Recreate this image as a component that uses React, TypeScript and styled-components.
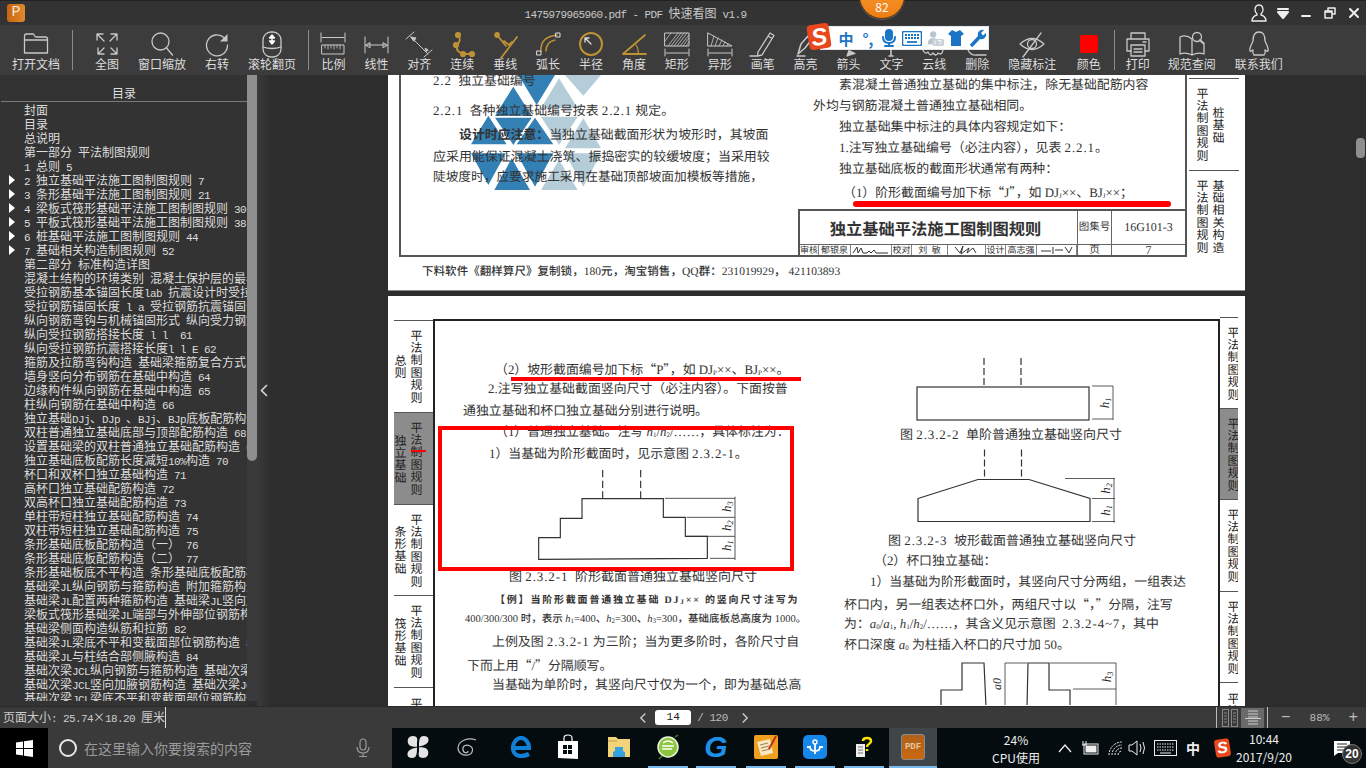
import React from 'react';
import styled, { createGlobalStyle } from 'styled-components';

const Global = createGlobalStyle`
  html, body { margin: 0; padding: 0; width: 1366px; height: 768px; overflow: hidden; background: #2d2d2d; }
  * { box-sizing: border-box; }
`;
const UI = '"Noto Sans CJK SC", "Liberation Sans", sans-serif';
const DOC = '"Liberation Serif", "Noto Sans CJK SC", serif';

const Shell = styled.div`display: flex; flex-direction: column; width: 1366px; height: 768px; overflow: hidden; font-family: ${UI};`;

/* title bar */
const TitleBar = styled.header`display: flex; align-items: center; height: 25px; flex: none; background: #333; border-top: 1px solid #222; padding-left: 7px;`;
const AppLogo = styled.div`width: 18px; height: 18px; border-radius: 3px; background: linear-gradient(90deg, #c8650f, #e08a30); color: #f5e6d5; font: 15px/18px "Liberation Mono", monospace; text-align: center;`;
const TitleText = styled.div`flex: 1; text-align: center; color: #c8c8c8; font-size: 12px; line-height: 24px; white-space: pre;`;
const WinControls = styled.div`display: flex; align-items: center; width: 120px; height: 24px; color: #eee;`;
const WinButton = styled.div<{ $w: number }>`width: ${p => p.$w}px; display: flex; justify-content: center; align-items: center;`;

/* toolbar */
const ToolBar = styled.nav`display: flex; height: 50px; flex: none; background: #3c3c3c; padding-left: 8px;`;
const ToolItem = styled.div<{ $w: number }>`width: ${p => p.$w}px; flex: none; display: flex; flex-direction: column; align-items: center; padding-top: 5px;`;
const ToolIcon = styled.div<{ $gold?: boolean }>`width: 28px; height: 28px; color: ${p => (p.$gold ? '#bd9234' : '#c8c8c8')};`;
const ToolLabel = styled.div`margin-top: -1px; font-size: 12px; line-height: 14px; color: #ddd; white-space: nowrap;`;
const ToolDivider = styled.div<{ $l: number; $r: number }>`width: 1px; height: 40px; margin: 5px ${p => p.$r}px 0 ${p => p.$l}px; background: #8a8a8a; flex: none;`;
const ColorSwatch = styled.div`width: 18px; height: 18px; margin: 5px; border-radius: 2px; background: #f00;`;

/* overlays at the top */
const Badge = styled.div`position: absolute; left: 859px; top: -27px; width: 46px; height: 46px; border-radius: 50%; background: linear-gradient(#f9a33c, #ef7d12); border: 1px solid #5c3a12; box-shadow: 0 1px 0 #fff3; color: #fff; font-size: 12px; display: flex; align-items: flex-end; justify-content: center; line-height: 17px; padding-bottom: 3px; z-index: 5;`;
const SogouBar = styled.div`position: absolute; left: 820px; top: 26px; width: 169px; height: 24px; background: #fff; border: 1px solid #dfe6ee; display: flex; align-items: center; z-index: 5; color: #1b75c4;`;
const SogouLogo = styled.div`position: absolute; left: 808px; top: 24px; width: 22px; height: 25px; background: #e9481c; border-radius: 4px; transform: rotate(-9deg); color: #fff; font: italic bold 24px/25px "Liberation Sans", sans-serif; text-align: center; z-index: 6;`;
const SogouCell = styled.div<{ $w: number; $bold?: boolean }>`width: ${p => p.$w}px; flex: none; display: flex; justify-content: center; align-items: center; font-size: 15px; font-weight: ${p => (p.$bold ? 700 : 400)};`;
const SogouTray = styled.div`width: 15px; height: 18px; background: #e9481c; border-radius: 3px; transform: rotate(-9deg); color: #fff; font: italic bold 16px/18px "Liberation Sans", sans-serif; text-align: center;`;

/* main */
const Main = styled.main`display: flex; height: 631px; flex: none; overflow: hidden; position: relative;`;
const Sidebar = styled.aside`width: 247px; flex: none; background: #333; color: #ddd; display: flex; flex-direction: column; padding-bottom: 5px;`;
const SideHead = styled.div`height: 27px; flex: none; margin-left: 1px; border-bottom: 1px solid #7a7a7a; text-align: center; font-size: 12px; line-height: 35px; overflow: hidden;`;
const SideList = styled.ul`list-style: none; margin: 1px 0 0; padding: 0; flex: 1; overflow: hidden;`;
const SideRow = styled.li`position: relative; height: 14px; padding-left: 24px; font-size: 12px; line-height: 14px; white-space: pre; overflow: hidden;`;
const Caret = styled.span`position: absolute; left: 9px; top: 2px; width: 0; height: 0; border-left: 6px solid #fff; border-top: 5px solid transparent; border-bottom: 5px solid transparent;`;
const Latin = styled.span`font: 11px "Liberation Mono", monospace; letter-spacing: -0.6px;`;
const ScrollTrack = styled.div`width: 10px; flex: none; background: #3a3a3a; margin-bottom: 5px; position: relative;`;
const ScrollThumb = styled.div`height: 386px; background: #8f8f8f; border-radius: 0 0 5px 5px;`;
const Collapse = styled.div`width: 14px; flex: none; background: linear-gradient(90deg, #3a3a3a, #2e2e2e); display: flex; align-items: center; justify-content: center; color: #ddd;`;
const Viewer = styled.section`flex: 1; background: #2d2d2d; padding-left: 117px; display: flex; flex-direction: column; gap: 5px; overflow: hidden; position: relative;`;
const ViewerThumb = styled.div`position: absolute; right: 1px; top: 63px; width: 9px; height: 20px; border-radius: 4px; background: #8f8f8f;`;

/* document */
const Page = styled.article<{ $h: number }>`position: relative; width: 857px; height: ${p => p.$h}px; flex: none; background: #fff; color: #333; font-family: ${DOC}; text-rendering: geometricPrecision; overflow: hidden; box-shadow: inset 0 -1px 0 #888;`;
const Mark = styled.svg`position: absolute; left: -3px; top: 0;`;
const FirstRow = styled.div`position: relative; display: flex; margin-left: 11px; height: 182px;`;
const FirstFrame = styled.div`width: 788px; flex: none; border: 2px solid #555; border-top: 0; display: flex; flex-direction: column; padding-left: 32px; overflow: hidden;`;
const Columns = styled.div`display: flex; gap: 42px;`;
const Col = styled.div<{ $w: number; $top?: number }>`width: ${p => p.$w}px; flex: none; margin-top: ${p => p.$top ?? 0}px;`;
const Line = styled.div<{ $x?: number; $h?: number; $mt?: number; $size?: number; $ls?: number; $weight?: number }>`
  padding-left: ${p => p.$x ?? 0}px; margin-top: ${p => p.$mt ?? 0}px; height: ${p => p.$h ?? 21.5}px; line-height: ${p => p.$h ?? 21.5}px;
  font-size: ${p => p.$size ?? 12.9}px; letter-spacing: ${p => p.$ls ?? 0}px; font-weight: ${p => p.$weight ?? 400}; white-space: pre;
`;
const Strong = styled.b`font-weight: 700;`;
const Sub = styled.sub`font-size: 7px; vertical-align: -1px; line-height: 0;`;
const Quote = styled.span`font-family: ${UI};`;
const Digits = styled.span`letter-spacing: 0.9px;`;
const Footer = styled.div`padding: 7px 0 0 34px; font-size: 11.5px; line-height: 16px; font-weight: 500; color: #333; white-space: pre; letter-spacing: 0.05px;`;
const TitleBox = styled.div`margin: auto 0 0 auto; width: 387px; height: 46px; flex: none; border-top: 2px solid #555; border-left: 2px solid #555; display: grid; grid-template-columns: 277px 34px 74px; grid-template-rows: 33px 11px; color: #333; font-size: 10px;`;
const TitleMain = styled.div`display: flex; align-items: center; justify-content: center; font-size: 16.3px; font-weight: 700; padding-right: 6px;`;
const TitleCell = styled.div<{ $size?: number }>`border-left: 1px solid #666; display: flex; align-items: center; justify-content: center; font-size: ${p => p.$size ?? 10.5}px; line-height: 11px;`;
const Signoff = styled.div`border-top: 1px solid #666; display: flex; align-items: center; overflow: hidden;`;
const SignCell = styled.span<{ $w: number }>`width: ${p => p.$w}px; flex: none; font-size: 9px; line-height: 10px; border-right: 1px solid #888; text-align: center; height: 11px; white-space: pre;`;
const Bottom = styled(TitleCell)`border-top: 1px solid #666;`;

const TabStack = styled.div<{ $w: number; $ml?: number; $mt?: number }>`width: ${p => p.$w}px; flex: none; margin-left: ${p => p.$ml ?? 0}px; margin-top: ${p => p.$mt ?? 0}px; display: flex; flex-direction: column; overflow: hidden;`;
const Tab = styled.div<{ $h: number; $active?: boolean; $pad?: number; $last?: boolean }>`height: ${p => p.$h}px; flex: none; border-top: 1px solid #555; background: ${p => (p.$active ? '#8c8c8c' : 'transparent')}; display: flex; align-items: ${p => (p.$last ? 'flex-start' : 'center')}; gap: 4px; padding-left: ${p => p.$pad ?? 0}px; padding-top: ${p => (p.$last ? 9 : 0)}px; color: #222;`;
const TabText = styled.span<{ $ls?: number }>`writing-mode: vertical-rl; text-orientation: upright; white-space: nowrap; font-size: 12px; line-height: 12px; letter-spacing: ${p => p.$ls ?? 0.4}px; font-family: ${UI};`;
const TabGap = styled.span`width: 12px; flex: none;`;

const SecondRow = styled.div`display: flex; padding-top: 23px;`;
const Frame = styled.div`width: 787px; flex: none; height: 600px; border: 2px solid #222; border-bottom: 0; display: flex; gap: 44px; padding: 36.5px 0 0 28px;`;
const Fig = styled.svg`display: block;`;
const Annot = styled.div`position: absolute; left: 50px; top: 130px; width: 356px; height: 145px; border: 4px solid #f00;`;
const RedRule = styled.div<{ $l: number; $t: number; $w: number; $h: number; $round?: boolean }>`position: absolute; left: ${p => p.$l}px; top: ${p => p.$t}px; width: ${p => p.$w}px; height: ${p => p.$h}px; background: #f00; border-radius: ${p => (p.$round ? '3px' : '0')};`;

/* status bar */
const StatusBar = styled.footer`height: 22px; flex: none; background: #3a3a3a; border-top: 1px solid #2a2a2a; display: flex; align-items: center; color: #ccc; font-size: 12px; position: relative;`;
const StatusText = styled.div`width: 166px; padding-left: 3px; white-space: pre; border-right: 1px solid #ddd; height: 21px; line-height: 19px; flex: none;`;
const Pager = styled.div`display: flex; align-items: center; margin-left: 473px; width: 110px;`;
const PageBox = styled.div`width: 40px; height: 15px; margin: 0 6px 0 7px; background: #fff; border-radius: 3px; color: #222; font: 11px/15px "Liberation Mono", monospace; text-align: center;`;
const PageText = styled.span`font: 11px "Liberation Mono", monospace; letter-spacing: -0.5px; white-space: pre; color: #bbb;`;
const ViewSwitch = styled.div`display: flex; align-items: center; margin-left: 467px; height: 22px; border-left: 1px solid #bbb; border-right: 1px solid #bbb; width: 52px; padding-left: 5px;`;
const ViewOn = styled.div`width: 23px; height: 20px; margin-left: 3px; background: #6a6a6a; display: flex; align-items: center; justify-content: center;`;
const Zoomer = styled.div`display: flex; align-items: center; justify-content: space-between; width: 77px; margin-left: 13px; color: #bbb; font: 11px "Liberation Mono", monospace;`;
const ZoomSign = styled.span`font-size: 16px;`;

/* taskbar */
const TaskBar = styled.div`height: 40px; flex: none; background: #050c10; display: flex; align-items: center; color: #fff; position: relative;`;
const StartButton = styled.div`width: 48px; height: 40px; background: #000; display: flex; align-items: center; justify-content: center; flex: none;`;
const SearchBox = styled.div`width: 344px; height: 40px; background: #3a3a3a; display: flex; align-items: center; padding-left: 11px; flex: none;`;
const Cortana = styled.div`width: 18px; height: 18px; border-radius: 50%; border: 2.5px solid #e8e8e8; flex: none;`;
const SearchText = styled.div`margin-left: 7px; font-size: 14px; color: #9a9a9a; width: 272px; white-space: nowrap;`;
const TaskSlot = styled.div<{ $ml: number; $w?: number; $on?: boolean; $active?: boolean }>`
  position: relative; width: ${p => p.$w ?? 40}px; height: 40px; flex: none; margin-left: ${p => p.$ml}px; display: flex; align-items: center; justify-content: center;
  background: ${p => (p.$active ? '#3f4548' : 'transparent')};
  border-bottom: 2px solid ${p => (p.$on ? '#76b9ed' : 'transparent')}; font-size: 12px;
`;
const CPU = styled.div`margin-left: 49px; width: 60px; flex: none; text-align: center; font-size: 12px; line-height: 18px; padding-top: 2px; color: #eee;`;
const Tray = styled.div<{ $ml: number; $w: number }>`margin-left: ${p => p.$ml}px; width: ${p => p.$w}px; flex: none; display: flex; justify-content: center; align-items: center; font-size: 14px; position: relative; color: #eee;`;
const Clock = styled.div`width: 76px; margin-left: -6px; flex: none; text-align: center; font: 12px/18px "Noto Sans CJK SC", sans-serif; color: #eee; white-space: nowrap;`;
const NotifyCount = styled.div`position: absolute; right: 0; bottom: -8px; width: 20px; height: 20px; border-radius: 50%; background: #333; border: 1px solid #777; color: #fff; font: bold 12px/18px "Liberation Sans", sans-serif; text-align: center;`;
const Pdf = styled.div`width: 24px; height: 26px; background: linear-gradient(#b0601a, #c8690f); border: 1px solid #8a8a8a; border-radius: 3px; font: bold 9px/24px "Liberation Mono", monospace; color: #e8c8a0; text-align: center;`;
const GLetter = styled.div`font: italic bold 30px/32px "Liberation Sans", sans-serif; color: #1e90e8;`;

/* drawing helper */
const Ico = ({ children, s = 28, w = 1.3, fill = 'none' }: { children: React.ReactNode; s?: number; w?: number; fill?: string }) => (
  <svg width={s} height={s} viewBox={`0 0 ${s} ${s}`} fill={fill} stroke="currentColor" strokeWidth={w} strokeLinecap="round" strokeLinejoin="round">{children}</svg>
);

const Mix = ({ text }: { text: string }) => (
  <>{text.split(/([\x20-\x7e]+)/).map((t, i) => (i % 2 ? <Latin key={i}>{t}</Latin> : t))}</>
);

const tools: { l: string; w: number; gold?: boolean; i: React.ReactNode; d?: [number, number] }[] = [
  { l: '打开文档', w: 56, d: [8, 13], i: <path d="M3 24V7q0-2 2-2h7l2 3h10q2 0 2 2v14zM3 11h23" transform="translate(-.5 -1)" /> },
  { l: '全图', w: 42, i: <path d="M4 10V4h6M4 4l7 7M24 10V4h-6M24 4l-7 7M11 24H5v-6M5 24l6-6M18 24h6v-6M24 24l-6-6" /> },
  { l: '窗口缩放', w: 68, i: <><circle cx="12.5" cy="11.5" r="8.5" /><path d="M18.5 18l6 7" /></> },
  { l: '右转', w: 42, i: <><path d="M21 7.5A10.5 10.5 0 1 0 24.5 15" /><path d="M24.5 4v7.5H17z" fill="currentColor" stroke="none" /></> },
  { l: '滚轮翻页', w: 68, d: [2, 3], i: <><rect x="5" y="2" width="18" height="25" rx="8" /><path d="M5 17q9 3 18 0" /><path d="M14 5v9M11.5 8L14 5l2.5 3zM11.5 11l2.5 3 2.5-3z" fill="#fff" stroke="#fff" /></> },
  { l: '比例', w: 42.93, i: <><path d="M2 3v9M26 3v9M3 7.5h22" strokeWidth="1" /><rect x="3" y="15" width="22" height="9" strokeWidth="1" /><path d="M6 15v3M9 15v4M12 15v3M15 15v4M18 15v3M21 15v4" strokeWidth=".8" /></> },
  { l: '线性', w: 42.93, i: <path d="M3 7v16M26 7v16M4 15h21M4 15l4-2.500v5zM25 15l-4-2.500v5z" strokeWidth="1" /> },
  { l: '对齐', w: 42.93, i: <><path d="M1 9l8-7M19 27l8-7M6 7l17 17" strokeWidth="1" /><path d="M6 7l5 1-2 3zM21 21l-1-3 3 2z" fill="currentColor" strokeWidth="1" /></> },
  { l: '连续', w: 42.93, gold: true, i: <g strokeWidth="1.800"><path d="M10 5q4 5-1 10-2 8 9 9h8" /><circle cx="10" cy="5" r="2.200" fill="currentColor" /><circle cx="8" cy="15" r="2.200" fill="currentColor" /><circle cx="15" cy="24" r="2.200" fill="currentColor" /><circle cx="24" cy="24" r="2.200" fill="currentColor" /></g> },
  { l: '垂线', w: 42.93, gold: true, i: <g strokeWidth="1.800"><path d="M26 7L10 28M6 5l9 11M13 11l5 4 3-3" /><circle cx="6" cy="5" r="2" fill="currentColor" /></g> },
  { l: '弧长', w: 42.93, gold: true, i: <g strokeWidth="1.500"><path d="M7 21q-1-14 16-16" /><path d="M12 21q0-9 9-11" /><rect x="3" y="21" width="4" height="4" strokeWidth="1" stroke="#ddd" /><rect x="22" y="3" width="4" height="4" strokeWidth="1" stroke="#ddd" /></g> },
  { l: '半径', w: 42.93, gold: true, i: <g strokeWidth="2"><circle cx="14" cy="14" r="11" /><path d="M14 14L8 8M8 8h4M8 8v4" strokeWidth="1.300" stroke="#ddd" /></g> },
  { l: '角度', w: 42.93, gold: true, i: <g strokeWidth="1.800"><path d="M25 5L3 24h23" /><path d="M16 15q3 4 2 9" strokeWidth="1.200" /></g> },
  { l: '矩形', w: 42.93, i: <><rect x="2" y="3" width="24" height="13" strokeWidth="1" /><path d="M5 16L15 3M11 16L21 3M17 16L26 5M2 11l6-8M23 16l3-4M8 16L18 3M14 16L24 3M20 16l6-8" strokeWidth=".8" /><path d="M2 19v7M26 19v7M3 23h22" strokeWidth="1" /></> },
  { l: '异形', w: 42.93, i: <><path d="M2 3l24 13H2z" strokeWidth="1" /><path d="M5 16l3-10M9 16l3-8M13 16l3-6M17 16l2-4M21 16l1-2" strokeWidth=".8" /><path d="M2 19v7M26 19v7M3 23h22" strokeWidth="1" /></> },
  { l: '画笔', w: 42.93, i: <path d="M9 22L21 3l4 2.500L13 25l-4.500 1zM19 6l4 2.500M1 26h7" /> },
  { l: '高亮', w: 42.93, i: <path d="M6 24l3-10 7-8 4 3-7 9zM5 26h8" strokeWidth="1.600" /> },
  { l: '箭头', w: 42.93, i: <path d="M12 26l8-2.500-6-3z" fill="currentColor" /> },
  { l: '文字', w: 42.93, i: <path d="M14 4v22M12 26h4" strokeWidth="1.600" /> },
  { l: '云线', w: 42.93, i: <path d="M3 20q2 5 5 2 2 5 5 1 3 4 5 0 4 3 5-3" /> },
  { l: '删除', w: 42.93, i: <path d="M5 20q3 6 9 5h9M13 25h6" /> },
  { l: '隐藏标注', w: 67, i: <><path d="M2 14q12-11 24 0-12 11-24 0z" /><circle cx="14" cy="14" r="4.500" /><path d="M5 27L23 3" /></> },
  { l: '颜色', w: 46, d: [2, 2], i: <ColorSwatch /> },
  { l: '打印', w: 42, i: <><path d="M7 9V3h14v6M7 21H3V9h22v12h-4" /><rect x="7" y="15" width="14" height="11" /><path d="M10 19h8M10 22h8M19 12h3" /></> },
  { l: '规范查阅', w: 66, i: <><path d="M14 9Q8 4 2 7v17q6-2 12 1 6-3 12-1V13M14 9v16" /><circle cx="19" cy="7" r="4.500" /><path d="M22 10l3 3" strokeWidth="2" /></> },
  { l: '联系我们', w: 68, i: <path d="M14 2c-5 0-6 4-6 9-2 4-4 8-3 10 1 1 2-1 3-1 0 2-1 3 1 5h10c2-2 1-3 1-5 1 0 2 2 3 1 1-2-1-6-3-10 0-5-1-9-6-9z" /> },
];

const toc: [string, boolean?][] = [
  ['封面'], ['目录'], ['总说明'], ['第一部分 平法制图规则'], ['1 总则 5'],
  ['2 独立基础平法施工图制图规则 7', true], ['3 条形基础平法施工图制图规则 21', true],
  ['4 梁板式筏形基础平法施工图制图规则 30', true], ['5 平板式筏形基础平法施工图制图规则 38', true],
  ['6 桩基础平法施工图制图规则 44', true], ['7 基础相关构造制图规则 52', true],
  ['第二部分 标准构造详图'], ['混凝土结构的环境类别 混凝土保护层的最小厚度'], ['受拉钢筋基本锚固长度lab 抗震设计时受拉钢筋'],
  ['受拉钢筋锚固长度 l a 受拉钢筋抗震锚固长度'], ['纵向钢筋弯钩与机械锚固形式 纵向受力钢筋'], ['纵向受拉钢筋搭接长度 l l  61'],
  ['纵向受拉钢筋抗震搭接长度l l E 62'], ['箍筋及拉筋弯钩构造 基础梁箍筋复合方式'], ['墙身竖向分布钢筋在基础中构造 64'],
  ['边缘构件纵向钢筋在基础中构造 65'], ['柱纵向钢筋在基础中构造 66'], ['独立基础DJj、DJp 、BJj、BJp底板配筋构造 67'],
  ['双柱普通独立基础底部与顶部配筋构造 68'], ['设置基础梁的双柱普通独立基础配筋构造 69'], ['独立基础底板配筋长度减短10%构造 70'],
  ['杯口和双杯口独立基础构造 71'], ['高杯口独立基础配筋构造 72'], ['双高杯口独立基础配筋构造 73'], ['单柱带短柱独立基础配筋构造 74'],
  ['双柱带短柱独立基础配筋构造 75'], ['条形基础底板配筋构造（一） 76'], ['条形基础底板配筋构造（二） 77'], ['条形基础板底不平构造 条形基础底板配筋构造'],
  ['基础梁JL纵向钢筋与箍筋构造 附加箍筋构造'], ['基础梁JL配置两种箍筋构造 基础梁JL竖向加腋'], ['梁板式筏形基础梁JL端部与外伸部位钢筋构造'],
  ['基础梁侧面构造纵筋和拉筋 82'], ['基础梁JL梁底不平和变截面部位钢筋构造 83'], ['基础梁JL与柱结合部侧腋构造 84'],
  ['基础次梁JCL纵向钢筋与箍筋构造 基础次梁'], ['基础次梁JCL竖向加腋钢筋构造 基础次梁JCL'], ['基础次梁JCL梁底不平和变截面部位钢筋构造'],
];

const dark = [
  [400, 0, 510, 0, 455, 90], [385, 35, 330, 122, 440, 122], [330, 128, 440, 128, 385, 210], [310, 122, 258, 208, 365, 208],
  [450, 128, 395, 208, 505, 208], [258, 235, 362, 235, 310, 330], [395, 235, 505, 235, 450, 335], [380, 250, 328, 345, 435, 345],
];
const light = [
  [540, 0, 648, 0, 595, 62], [522, 10, 468, 100, 578, 100], [468, 125, 578, 125, 522, 210], [595, 130, 540, 220, 648, 220],
  [540, 235, 648, 235, 595, 335], [522, 255, 468, 345, 578, 345],
];

const DimLabel = ({ x, y, n, z = 13 }: { x: number; y: number; n: string; z?: number }) => (
  <text x={x} y={y} transform={`rotate(-90 ${x} ${y})`} textAnchor="middle" fontFamily="Liberation Serif, serif" fontStyle="italic" fontSize={z} fill="#222" stroke="none">
    h<tspan fontSize={z * 0.65} dy={z * 0.15}>{n}</tspan>
  </text>
);

const TabsFirst = () => (
  <TabStack $w={50} $ml={2} $mt={3}>
    <Tab $h={92} $pad={7}><TabText>平法制图规则</TabText><TabText $ls={0.5}>桩基础</TabText></Tab>
    <Tab $h={92} $pad={7}><TabText>平法制图规则</TabText><TabText>基础相关构造</TabText></Tab>
    <Tab $h={1} />
  </TabStack>
);

export default function App() {
  return (
    <Shell>
      <Global />
      <TitleBar>
        <AppLogo>P</AppLogo>
        <TitleText><Mix text="1475979965960.pdf - PDF " />快速看图<Mix text=" v1.9" /></TitleText>
        <WinControls>
          <WinButton $w={26}><Ico s={20}><path d="M10 2c-3 0-4 2-4 5 0 2 1 3 2 4v1q-4 1-5 5v1h14v-1q-1-4-5-5v-1c1-1 2-2 2-4 0-3-1-5-4-5z" /></Ico></WinButton>
          <WinButton $w={22}><Ico s={14} w={2}><path d="M2 3h10" /><path d="M2 6h10l-5 6z" fill="currentColor" /></Ico></WinButton>
          <WinButton $w={24}><Ico s={12} w={2}><path d="M2 9h8" /></Ico></WinButton>
          <WinButton $w={24}><Ico s={12} w={1.5}><path d="M4 3V1h7v6H9M1 4h7v7H1zM1 5h7" /></Ico></WinButton>
          <WinButton $w={24}><Ico s={12} w={2}><path d="M2 2l8 8M10 2l-8 8" /></Ico></WinButton>
        </WinControls>
      </TitleBar>

      <ToolBar>
        {tools.map(t => (
          <React.Fragment key={t.l}>
            <ToolItem $w={t.w}>
              <ToolIcon $gold={t.gold}>{t.l === '颜色' ? t.i : <Ico>{t.i}</Ico>}</ToolIcon>
              <ToolLabel>{t.l}</ToolLabel>
            </ToolItem>
            {t.d && <ToolDivider $l={t.d[0]} $r={t.d[1]} />}
          </React.Fragment>
        ))}
      </ToolBar>

      <Badge>82</Badge>
      <SogouLogo>S</SogouLogo>
      <SogouBar>
        <SogouCell $w={15} />
        <SogouCell $w={20} $bold>中</SogouCell>
        <SogouCell $w={24} $bold>°,</SogouCell>
        <SogouCell $w={18}><Ico s={18} w={2}><rect x="6" y="1" width="6" height="10" rx="3" fill="currentColor" /><path d="M3 8q0 6 6 6t6-6M9 14v3M5 17h8" /></Ico></SogouCell>
        <SogouCell $w={28}><svg width="20" height="15" viewBox="0 0 20 15" fill="none" stroke="currentColor"><rect x=".5" y=".5" width="19" height="14" rx="1.500" strokeWidth="1.500" fill="#fff" /><path d="M3 4h14M3 7h14" strokeWidth="1.800" strokeDasharray="2 1" /><path d="M5 11h10" strokeWidth="1.800" /></svg></SogouCell>
        <SogouCell $w={18}><svg width="20" height="18" viewBox="0 0 20 18"><circle cx="8" cy="5" r="3.500" fill="#b8c4d0" /><path d="M2 16q0-7 6-7t6 7z" fill="#b8c4d0" /><rect x="7" y="10" width="13" height="8" rx="2" fill="#c8d0d8" /><path d="M10 12v4M13 12h4l-2 4" stroke="#fff" fill="none" /></svg></SogouCell>
        <SogouCell $w={24}><svg width="18" height="18" viewBox="0 0 18 18"><path d="M5 1l4 2 4-2 4 4-3 2v10H4V7L1 5z" fill="currentColor" /></svg></SogouCell>
        <SogouCell $w={20}><svg width="18" height="18" viewBox="0 0 18 18" fill="currentColor"><path d="M1 15.500L9 7q-1-4 2-5.500 2-1 4-.500l-3 3 2 2.500 3-2.500q.500 2-.500 4-2 3-5.500 2L4 17.500q-2 1-3-2z" /></svg></SogouCell>
      </SogouBar>

      <Main>
        <Sidebar>
          <SideHead>目录</SideHead>
          <SideList>
            {toc.map(([t, c]) => (
              <SideRow key={t}>{c && <Caret />}<Mix text={t} /></SideRow>
            ))}
          </SideList>
        </Sidebar>
        <ScrollTrack><ScrollThumb /></ScrollTrack>
        <Collapse><svg width="9" height="13" viewBox="0 0 9 13" fill="none" stroke="currentColor" strokeWidth="1.500"><path d="M7 1L1.500 6.500 7 12" /></svg></Collapse>

        <Viewer>
          <ViewerThumb />
          <Page $h={216}>
            <Mark width="480" height="220" viewBox="0 0 1440 660">
              {dark.map((p, i) => <polygon key={i} points={p.join(' ')} fill="#3380b4" />)}
              {light.map((p, i) => <polygon key={i} points={p.join(' ')} fill="#b5cdd8" />)}
            </Mark>
            <FirstRow>
              <FirstFrame>
                <Columns>
                  <Col $w={338} $top={-4}>
                    <Line $h={21}><Digits>2.2</Digits>  独立基础编号</Line>
                    <Line $h={21} $mt={9}><Digits>2.2.1</Digits>  各种独立基础编号按表 <Digits>2.2.1</Digits> 规定。</Line>
                    <Line $h={22} $x={26} $mt={2}><Strong>设计时应注意：</Strong>当独立基础截面形状为坡形时，其坡面</Line>
                    <Line $h={21} $size={12.96}>应采用能保证混凝土浇筑、振捣密实的较缓坡度；当采用较</Line>
                    <Line $h={21} $size={12.7}>陡坡度时，应要求施工采用在基础顶部坡面加模板等措施，</Line>
                  </Col>
                  <Col $w={340}>
                    <Line $h={21} $x={26}>素混凝土普通独立基础的集中标注，除无基础配筋内容</Line>
                    <Line $h={21}>外均与钢筋混凝土普通独立基础相同。</Line>
                    <Line $h={21} $x={26}>独立基础集中标注的具体内容规定如下：</Line>
                    <Line $h={21} $x={26}>1.注写独立基础编号（必注内容），见表 <Digits>2.2.1</Digits>。</Line>
                    <Line $h={21} $x={26}>独立基础底板的截面形状通常有两种：</Line>
                    <Line $h={21} $x={30} $mt={1}>（1）阶形截面编号加下标<Quote>“</Quote>J<Quote>”</Quote>，如 DJ<Sub>J</Sub>××、BJ<Sub>J</Sub>××；</Line>
                  </Col>
                </Columns>
                <TitleBox>
                  <TitleMain>独立基础平法施工图制图规则</TitleMain>
                  <TitleCell>图集号</TitleCell>
                  <TitleCell $size={12}>16G101-3</TitleCell>
                  <Signoff>
                    <SignCell $w={19}>审核</SignCell>
                    <SignCell $w={32}>郁银泉</SignCell>
                    <SignCell $w={41}><svg width="40" height="10" viewBox="0 0 40 10" fill="none" stroke="#333"><path d="M2 8l4-6 1 6 3-5 2 5h4l2-2 2 2 3-3 2 3h12" /></svg></SignCell>
                    <SignCell $w={20}>校对</SignCell>
                    <SignCell $w={36}>刘  敏</SignCell>
                    <SignCell $w={38}><svg width="30" height="10" viewBox="0 0 30 10" fill="none" stroke="#333"><path d="M3 2l5 6 3-7-2 8 8-6-2 5 6-5 3 5" /></svg></SignCell>
                    <SignCell $w={20}>设计</SignCell>
                    <SignCell $w={31}>高志强</SignCell>
                    <SignCell $w={40}><svg width="36" height="10" viewBox="0 0 36 10" fill="none" stroke="#333"><path d="M2 6h10M14 2v7M16 5h8M26 2l4 6 3-6" /></svg></SignCell>
                  </Signoff>
                  <Bottom>页</Bottom>
                  <Bottom $size={12}>7</Bottom>
                </TitleBox>
              </FirstFrame>
              <TabsFirst />
            </FirstRow>
            <Footer>下料软件《翻样算尺》复制锁，180元，淘宝销售，QQ群：231019929， 421103893</Footer>
            <RedRule $l={465} $t={126} $w={318} $h={6} $round />
          </Page>

          <Page $h={420}>
            <SecondRow>
              <TabStack $w={39} $ml={6} $mt={1}>
                <Tab $h={92}><TabText>总则</TabText><TabText>平法制图规则</TabText></Tab>
                <Tab $h={92} $active><TabText>独立基础</TabText><TabText>平法制图规则</TabText></Tab>
                <Tab $h={91}><TabText>条形基础</TabText><TabText>平法制图规则</TabText></Tab>
                <Tab $h={92}><TabText>筏形基础</TabText><TabText>平法制图规则</TabText></Tab>
                <Tab $h={60} $last><TabGap /><TabText>平法制图规则</TabText></Tab>
              </TabStack>
              <Frame>
                <Col $w={337}>
                  <Line $x={32}>（2）坡形截面编号加下标<Quote>“</Quote>P<Quote>”</Quote>，如 DJ<Sub>P</Sub>××、BJ<Sub>P</Sub>××。</Line>
                  <Line $x={25}>2.注写独立基础截面竖向尺寸（必注内容）。下面按普</Line>
                  <Line>通独立基础和杯口独立基础分别进行说明。</Line>
                  <Line $x={32}>（1）普通独立基础。注写 <i>h</i><Sub>1</Sub>/<i>h</i><Sub>2</Sub>/……，具体标注为：</Line>
                  <Line $x={26}>1）当基础为阶形截面时，见示意图 <Digits>2.3.2-1</Digits>。</Line>
                  <Fig width="337" height="104" viewBox="234 510 1011 312" fill="none" stroke="#333" strokeWidth="3.500">
                    <path d="M461 793V728H526V670H591V611H835V667H901V724H967V790z" />
                    <path d="M653 525V611M767 525V611" strokeDasharray="22 10" />
                    <path d="M840 610H1050M905 667H1050M905 724H1050M975 790H1050M1050 605V795" strokeWidth="2.500" />
                    <DimLabel x={1037} y={635} n="3" z={39} />
                    <DimLabel x={1037} y={692} n="2" z={39} />
                    <DimLabel x={1037} y={752} n="1" z={39} />
                  </Fig>
                  <Line $x={46} $h={16} $size={13}>图 <Digits>2.3.2-1</Digits>  阶形截面普通独立基础竖向尺寸</Line>
                  <Line $x={32} $h={18} $mt={7} $size={10} $ls={1.8} $weight={700}>【例】当阶形截面普通独立基础 DJ<Sub>J</Sub>×× 的竖向尺寸注写为</Line>
                  <Line $x={2} $h={18} $mt={1} $size={10.5} $weight={500}>400/300/300 时，表示 <i>h</i><Sub>1</Sub>=400、<i>h</i><Sub>2</Sub>=300、<i>h</i><Sub>3</Sub>=300，基础底板总高度为 1000。</Line>
                  <Line $x={29} $mt={3}>上例及图 <Digits>2.3.2-1</Digits> 为三阶；当为更多阶时，各阶尺寸自</Line>
                  <Line $x={4}>下而上用<Quote>“</Quote>/<Quote>”</Quote>分隔顺写。</Line>
                  <Line $x={29}>当基础为单阶时，其竖向尺寸仅为一个，即为基础总高</Line>
                </Col>
                <Col $w={337}>
                  <Fig width="337" height="66" viewBox="844 357 337 66" fill="none" stroke="#333" strokeWidth="1.200">
                    <rect x="917" y="386" width="172" height="33" />
                    <path d="M984 357V386M1021 357V386" strokeDasharray="7 3" />
                    <path d="M1092 385H1113M1092 418H1113M1113 385V419" strokeWidth="0.800" />
                    <DimLabel x={1109} y={402} n="1" />
                  </Fig>
                  <Line $x={56} $h={21} $size={13}>图 <Digits>2.3.2-2</Digits>  单阶普通独立基础竖向尺寸</Line>
                  <Fig width="337" height="85" viewBox="844 444.500 337 85" fill="none" stroke="#333" strokeWidth="1.200">
                    <path d="M918 498L978 479H1029L1090 498V521H918z" />
                    <path d="M984.500 449V479M1021.500 449V479" strokeDasharray="7 3" />
                    <path d="M1065 478H1115M1092 498H1115M1092 521H1115M1114 478V522" strokeWidth="0.800" />
                    <DimLabel x={1110} y={488} n="2" />
                    <DimLabel x={1110} y={510} n="1" />
                  </Fig>
                  <Line $x={44} $h={21} $size={13}>图 <Digits>2.3.2-3</Digits>  坡形截面普通独立基础竖向尺寸</Line>
                  <Line $x={30} $h={21}>（2）杯口独立基础：</Line>
                  <Line $x={26} $h={21}>1）当基础为阶形截面时，其竖向尺寸分两组，一组表达</Line>
                  <Line $h={21}>杯口内，另一组表达杯口外，两组尺寸以<Quote>“</Quote>，<Quote>”</Quote>分隔，注写</Line>
                  <Line $h={21}>为：<i>a</i><Sub>0</Sub>/<i>a</i><Sub>1</Sub>, <i>h</i><Sub>1</Sub>/<i>h</i><Sub>2</Sub>/……，其含义见示意图  <Digits>2.3.2-4~7</Digits>，其中</Line>
                  <Line $h={21}>杯口深度 <i>a</i><Sub>0</Sub> 为柱插入杯口的尺寸加 50。</Line>
                  <Fig width="337" height="49" viewBox="844 657 337 49" fill="none" stroke="#333" strokeWidth="1.200">
                    <path d="M941 708V691H962V664H984L986 708M1027 708L1028 664H1049V691H1070V708" />
                    <path d="M1005 664H1027M1005 664V708M1050 664H1116M1073 690H1116M1116 664V708" strokeWidth="0.800" />
                    <DimLabel x={1111} y={678} n="3" />
                    <text x="1001" y="685" transform="rotate(-90 1001 685)" textAnchor="middle" fontStyle="italic" fontFamily="Liberation Serif, serif" fontSize="12" fill="#222" stroke="none">a0</text>
                  </Fig>
                </Col>
              </Frame>
              <TabStack $w={18} $mt={-2}>
                <Tab $h={91} $pad={7}><TabText>平法制图规则</TabText></Tab>
                <Tab $h={91} $pad={7} $active><TabText>平法制图规则</TabText></Tab>
                <Tab $h={92} $pad={7}><TabText>平法制图规则</TabText></Tab>
                <Tab $h={91} $pad={7}><TabText>平法制图规则</TabText></Tab>
                <Tab $h={60} $pad={7} $last><TabText>平法制图规则</TabText></Tab>
              </TabStack>
            </SecondRow>
            <Annot />
            <RedRule $l={123} $t={81} $w={290} $h={4} />
            <RedRule $l={23} $t={154} $w={15} $h={2} />
          </Page>
        </Viewer>
      </Main>

      <StatusBar>
        <StatusText>页面大小<Mix text=": 25.74" />×<Mix text="18.20 " />厘米</StatusText>
        <Pager>
          <svg width="10" height="12" viewBox="0 0 10 12" fill="none" stroke="#ccc" strokeWidth="1.500"><path d="M7 1L2 6l5 5" /></svg>
          <PageBox>14</PageBox>
          <PageText>/ 120  </PageText>
          <svg width="10" height="12" viewBox="0 0 10 12" fill="none" stroke="#ccc" strokeWidth="1.500"><path d="M3 1l5 5-5 5" /></svg>
        </Pager>
        <ViewSwitch>
          <svg width="16" height="18" viewBox="0 0 16 18" fill="none" stroke="#888"><rect x=".5" y=".5" width="6" height="17" /><rect x="9.500" y=".5" width="6" height="17" /><path d="M2 4h3M2 7h3M2 10h3M2 13h3M11 4h3M11 7h3M11 10h3M11 13h3" /></svg>
          <ViewOn><svg width="16" height="18" viewBox="0 0 16 18" fill="none" stroke="#ccc"><path d="M3 2h10M3 5h10M3 8h10M0 9.500h16M3 12h10M3 15h10" /></svg></ViewOn>
        </ViewSwitch>
        <Zoomer><ZoomSign>−</ZoomSign><span>88%</span><ZoomSign>+</ZoomSign></Zoomer>
      </StatusBar>

      <TaskBar>
        <StartButton><svg width="17" height="17" viewBox="0 0 17 17" fill="#fff"><path d="M0 2.500l7-1V8H0zM8 1.300L17 0v8H8zM0 9h7v6.500l-7-1zM8 9h9v8l-9-1.300z" /></svg></StartButton>
        <SearchBox>
          <Cortana />
          <SearchText>在这里输入你要搜索的内容</SearchText>
          <svg width="14" height="20" viewBox="0 0 14 20" fill="none" stroke="#999" strokeWidth="1.200"><rect x="4" y="1" width="6" height="11" rx="3" /><path d="M1 9q0 6 6 6t6-6M7 15v3M3 18.500h8" /></svg>
        </SearchBox>
        <TaskSlot $ml={6}><svg width="22" height="24" viewBox="0 0 22 24" fill="#e4e4e4"><path d="M10 11.500C8 12 2 12 1 8s1-7 5-7 5 3 4 6zM12 11.500C12 6 12 1 17 1s5 4 4 6-5 4-9 4.500zM10 12.500c0 5.500 0 10.500-5 10.500s-5-4-4-6 5-4 9-4.500zM12 12.500c2-.500 8-.500 9 3.500s-1 7-5 7-5-3-4-6z" /></svg></TaskSlot>
        <TaskSlot $ml={9}><svg width="20" height="20" viewBox="0 0 20 20" fill="none" stroke="#bbb" strokeWidth="1.200"><path d="M19 3C11 0 1 4 1 11c0 5 5 8 10 7s6-7 2-9-8 0-7 4 5 3 5 1" /></svg></TaskSlot>
        <TaskSlot $ml={14}><svg width="20" height="22" viewBox="0 0 20 22" fill="none" stroke="#0f7fd8" strokeWidth="4.200"><path d="M3 12h15c0-6-4-10-8-10S2 6 2 12s4 8 8 8c3 0 6-1 8-2" /></svg></TaskSlot>
        <TaskSlot $ml={7}><svg width="22" height="26" viewBox="0 0 22 26"><path d="M1 7h20v18L1 24z" fill="#fff" /><path d="M7 7V4q0-3 4-3t4 3v3" fill="none" stroke="#fff" strokeWidth="1.200" /><path d="M6 11h4v4H6zM11 11h4v4h-4zM6 16h4v4H6zM11 16h4v4h-4z" fill="#050c10" /></svg></TaskSlot>
        <TaskSlot $ml={11}><svg width="22" height="20" viewBox="0 0 22 20"><path d="M0 0h8l2 2h12v18H0z" fill="#f3d37a" /><path d="M0 3h9v2H0z" fill="#d8b860" /><path d="M7 10h8v4l2 1v5H5v-5l2-1z" fill="#34a3dd" /></svg></TaskSlot>
        <TaskSlot $ml={9} $on><svg width="24" height="26" viewBox="0 0 24 26"><circle cx="12" cy="13" r="10" fill="#8cc63f" stroke="#eef6e0" strokeWidth="1.500" /><path d="M6 12h12M6 15h10" stroke="#fff" strokeWidth="1.500" /><path d="M7 9q5-4 10 0" fill="none" stroke="#fff" strokeWidth="1.500" /><path d="M3 25l3-3M19 3l3-2" stroke="#3a8a20" strokeWidth="1.500" /></svg></TaskSlot>
        <TaskSlot $ml={8} $on><GLetter>G</GLetter></TaskSlot>
        <TaskSlot $ml={10} $on><svg width="24" height="24" viewBox="0 0 24 24"><rect width="24" height="24" rx="2" fill="#f0a020" /><path d="M3 7l13-3 3 14-12 3z" fill="#f8e8c0" /><path d="M6 10l8-2M7 13l8-2M8 16l8-2" stroke="#a08050" /><path d="M15 14l7-13" stroke="#c03010" strokeWidth="2" /></svg></TaskSlot>
        <TaskSlot $ml={9} $on><svg width="24" height="24" viewBox="0 0 24 24"><rect width="24" height="24" rx="5" fill="#1487e8" /><path d="M12 9v10M5 12h2q0 4 5 4t5-4h2M8 12H4M20 12h-4" fill="none" stroke="#fff" strokeWidth="1.800" /><circle cx="12" cy="7" r="2" fill="none" stroke="#fff" strokeWidth="1.400" /></svg></TaskSlot>
        <TaskSlot $ml={9} $on><svg width="18" height="22" viewBox="0 0 18 22"><rect x="1" y="8" width="9" height="13" fill="#eee" /><path d="M3 11h5M3 14h5M3 17h5" stroke="#777" /><path d="M8 5q0-3 4-3t4 3q0 2-2 3-2 1-2 3M12 13v2" fill="none" stroke="#ffe400" strokeWidth="2.500" /></svg></TaskSlot>
        <TaskSlot $ml={5} $w={48} $on $active><Pdf>PDF</Pdf></TaskSlot>
        <CPU>24%<br />CPU使用</CPU>
        <Tray $ml={9} $w={20}><svg width="14" height="9" viewBox="0 0 14 9" fill="none" stroke="#eee" strokeWidth="1.300"><path d="M1 8l6-7 6 7" /></svg></Tray>
        <Tray $ml={3} $w={24}><svg width="18" height="16" viewBox="0 0 18 16" fill="none" stroke="#eee"><rect x="3" y="4" width="14" height="10" /><rect x="5" y="6" width="10" height="6" fill="#eee" /><path d="M2 1v4M5 1v4M1 5h5" /></svg></Tray>
        <Tray $ml={4} $w={20}><svg width="18" height="16" viewBox="0 0 18 16" fill="none" stroke="#eee"><path d="M2 15a13 13 0 0 1 13-13M5 15a10 10 0 0 1 10-10M8 15a7 7 0 0 1 7-7M11 15a4 4 0 0 1 4-4" strokeDasharray="2 1" /></svg></Tray>
        <Tray $ml={2} $w={18}><svg width="18" height="16" viewBox="0 0 18 16" fill="none" stroke="#eee"><path d="M1 5h3l5-4v14l-5-4H1zM12 4q2 4 0 8M15 2q3 6 0 12" /></svg></Tray>
        <Tray $ml={7} $w={24}><svg width="23" height="16" viewBox="0 0 23 16" fill="none" stroke="#eee"><rect x=".5" y=".5" width="22" height="15" /><path d="M3 4h17M3 7h17M3 10h17" strokeDasharray="1.500 1" /><path d="M6 13h11" /></svg></Tray>
        <Tray $ml={8} $w={16}><b>中</b></Tray>
        <Tray $ml={11} $w={20}><SogouTray>S</SogouTray></Tray>
        <Clock>10:44<br />2017/9/20</Clock>
        <Tray $ml={20} $w={40}>
          <svg width="16" height="15" viewBox="0 0 16 15"><path d="M0 0h16v12H4l-4 3z" fill="#fff" /><path d="M3 3h10M3 6h10M3 9h10" stroke="#222" /></svg>
          <NotifyCount>20</NotifyCount>
        </Tray>
      </TaskBar>
    </Shell>
  );
}
